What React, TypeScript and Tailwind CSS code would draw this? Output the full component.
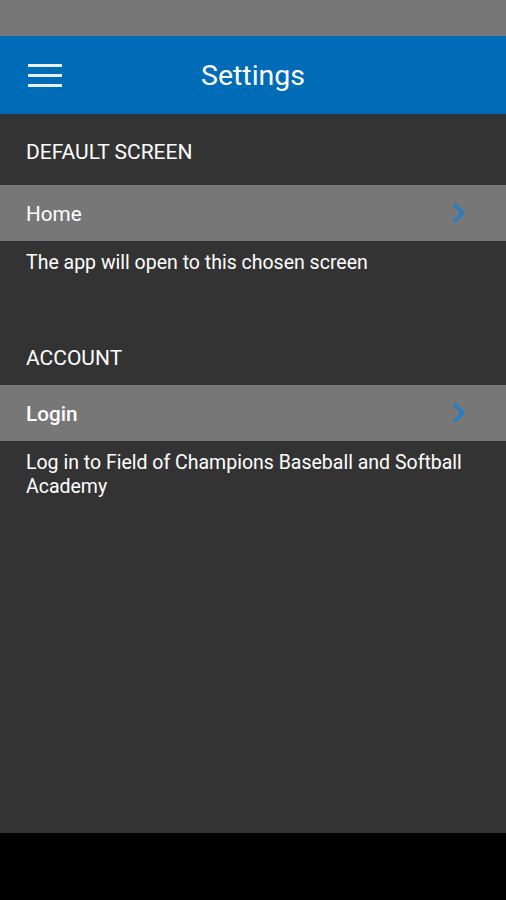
import React from 'react';

const Chevron: React.FC = () => (
  <svg width="16" height="22" viewBox="0 0 16 22" fill="none">
    <path d="M3 2 L12 11 L3 20" stroke="#1b7fcf" strokeWidth="3" strokeLinecap="butt" strokeLinejoin="miter" />
  </svg>
);

const Row: React.FC<{ label: string; bold?: boolean }> = ({ label, bold }) => (
  <div className="flex items-center justify-between h-[56px] bg-[#777777] pl-[26px] pr-[39px]">
    <span className={`text-[20.7px] text-white pt-[3px] ${bold ? 'font-medium' : ''}`}>{label}</span>
    <Chevron />
  </div>
);

export default function App() {
  return (
    <div className="w-[506px] h-[900px] flex flex-col bg-black" style={{ fontFamily: 'Roboto, sans-serif' }}>
      <div className="h-[36px] bg-[#777777]" />
      <div className="h-[78px] bg-[#006bb7] flex items-center relative">
        <div className="absolute left-[28px] top-[28px] flex flex-col gap-[7px]">
          <div className="w-[34px] h-[3px] bg-[#e8f0fa]" />
          <div className="w-[34px] h-[3px] bg-[#e8f0fa]" />
          <div className="w-[34px] h-[3px] bg-[#e8f0fa]" />
        </div>
        <div className="flex-1 text-center text-white text-[28.5px] leading-none pt-[2px]">Settings</div>
      </div>
      <div className="h-[719px] bg-[#333333] flex flex-col">
        <div className="h-[71px] flex items-center pl-[26px] pt-[6px] text-white text-[21px]">DEFAULT SCREEN</div>
        <Row label="Home" />
        <div className="pl-[26px] pt-[10px] text-white text-[19.5px] leading-[24px]">The app will open to this chosen screen</div>
        <div className="h-[110px] flex items-end pb-[11px] pl-[26px] text-white text-[21px]">ACCOUNT</div>
        <Row label="Login" bold />
        <div className="pl-[26px] pr-[20px] pt-[10px] text-white text-[19.5px] leading-[24px]">
          Log in to Field of Champions Baseball and Softball Academy
        </div>
      </div>
      <div className="flex-1 bg-black" />
    </div>
  );
}
